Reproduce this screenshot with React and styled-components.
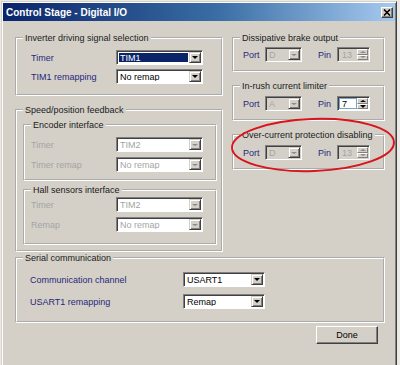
import styled, { createGlobalStyle } from 'styled-components'

const GlobalStyle = createGlobalStyle`
  * { box-sizing: border-box; }
  html, body { margin: 0; background: #eceae4; }
  body {
    font-family: 'Liberation Sans', Arial, sans-serif;
    font-size: 9px;
  }
`

function Dropdown({ value, selected, disabled, filled }) {
  return (
    <SelectBox $filled={filled}>
      <SelectValue $selected={selected} $disabled={disabled}>
        {value}
      </SelectValue>
      <ArrowButton>
        <Arrow $disabled={disabled} />
      </ArrowButton>
    </SelectBox>
  )
}

function Spinner({ value, disabled, focused }) {
  return (
    <SelectBox $filled={disabled}>
      <SpinValue $disabled={disabled} $focused={focused}>
        {value}
      </SpinValue>
      <SpinButtons>
        <SpinButton>
          <Arrow $up $disabled={disabled} />
        </SpinButton>
        <SpinButton>
          <Arrow $disabled={disabled} />
        </SpinButton>
      </SpinButtons>
    </SelectBox>
  )
}

function PortPin({ port, pin, portDisabled, pinDisabled, focused }) {
  return (
    <Row $cols="22px 37px 16px 19px 33px">
      <Label>Port</Label>
      <Dropdown value={port} disabled={portDisabled} filled />
      <span />
      <Label>Pin</Label>
      <Spinner value={pin} disabled={pinDisabled} focused={focused} />
    </Row>
  )
}

export default function App() {
  return (
    <Page>
      <GlobalStyle />
      <Window>
        <TitleBar>
          <Title>Control Stage - Digital I/O</Title>
          <CloseButton>
            <svg width="8" height="7" viewBox="0 0 8 7">
              <path d="M1 0.5 L7 6.5 M7 0.5 L1 6.5" stroke="#000" strokeWidth="1.6" />
            </svg>
          </CloseButton>
        </TitleBar>

        <Body>
          <Columns>
            <LeftColumn>
              <Group>
                <Legend>Inverter driving signal selection</Legend>
                <GroupBody $pad="6px 0 10px 14px" $gap={4}>
                  <Row $cols="85px 87px">
                    <Label>Timer</Label>
                    <Dropdown value="TIM1" selected />
                  </Row>
                  <Row $cols="85px 87px">
                    <Label>TIM1 remapping</Label>
                    <Dropdown value="No remap" />
                  </Row>
                </GroupBody>
              </Group>

              <Group>
                <Legend>Speed/position feedback</Legend>
                <GroupBody $pad="3px 4px 5px 6px" $gap={3}>
                  <SubGroup>
                    <Legend>Encoder interface</Legend>
                    <GroupBody $pad="6px 0 7px 6px" $gap={5}>
                      <Row $cols="85px 87px">
                        <Label $disabled>Timer</Label>
                        <Dropdown value="TIM2" disabled />
                      </Row>
                      <Row $cols="85px 87px">
                        <Label $disabled>Timer remap</Label>
                        <Dropdown value="No remap" disabled />
                      </Row>
                    </GroupBody>
                  </SubGroup>
                  <SubGroup>
                    <Legend>Hall sensors interface</Legend>
                    <GroupBody $pad="1px 0 11px 6px" $gap={5}>
                      <Row $cols="85px 87px">
                        <Label $disabled>Timer</Label>
                        <Dropdown value="TIM2" disabled />
                      </Row>
                      <Row $cols="85px 87px">
                        <Label $disabled>Remap</Label>
                        <Dropdown value="No remap" disabled />
                      </Row>
                    </GroupBody>
                  </SubGroup>
                </GroupBody>
              </Group>
            </LeftColumn>

            <RightColumn>
              <Group>
                <Legend>Dissipative brake output</Legend>
                <GroupBody $pad="3px 0 8px 9px">
                  <PortPin port="D" pin="13" portDisabled pinDisabled />
                </GroupBody>
              </Group>
              <Group>
                <Legend>In-rush current limiter</Legend>
                <GroupBody $pad="4px 0 8px 9px">
                  <PortPin port="A" pin="7" portDisabled focused />
                </GroupBody>
              </Group>
              <Group>
                <Legend>Over-current protection disabling</Legend>
                <GroupBody $pad="4px 0 8px 9px">
                  <PortPin port="D" pin="13" portDisabled pinDisabled />
                </GroupBody>
              </Group>
            </RightColumn>
          </Columns>

          <Group>
            <Legend>Serial communication</Legend>
            <GroupBody $pad="8px 0 12px 13px" $gap={7}>
              <Row $cols="153px 82px">
                <Label>Communication channel</Label>
                <Dropdown value="USART1" />
              </Row>
              <Row $cols="153px 82px">
                <Label>USART1 remapping</Label>
                <Dropdown value="Remap" />
              </Row>
            </GroupBody>
          </Group>

          <Footer>
            <Button>Done</Button>
          </Footer>
        </Body>
      </Window>

      <Annotation width="400" height="365" viewBox="0 0 400 365">
        <ellipse
          cx="313"
          cy="145"
          rx="81"
          ry="26"
          fill="none"
          stroke="#d8141c"
          strokeWidth="2"
          transform="rotate(-2 313 145)"
        />
      </Annotation>
    </Page>
  )
}

const Page = styled.div`
  position: relative;
  width: 400px;
  height: 365px;
  overflow: hidden;
`

const Window = styled.div`
  margin: 1px 0 0 1px;
  width: 396px;
  min-height: 380px;
  padding: 1px;
  background: #d4d0c8;
  border: 1px solid;
  border-color: #d4d0c8 #404040 #404040 #d4d0c8;
  box-shadow: inset 1px 1px 0 #fff, inset -1px -1px 0 #808080;
`

const TitleBar = styled.div`
  display: flex;
  align-items: center;
  justify-content: space-between;
  height: 18px;
  padding: 0 2px 0 3px;
  background: linear-gradient(to right, #0a246a, #3a6ea5 55%, #a6caf0);
`

const Title = styled.span`
  color: #fff;
  font-weight: bold;
  font-size: 10px;
`

const CloseButton = styled.div`
  display: flex;
  align-items: center;
  justify-content: center;
  width: 12px;
  height: 11px;
  background: #d4d0c8;
  border: 1px solid;
  border-color: #fff #404040 #404040 #fff;
  box-shadow: inset -1px -1px 0 #808080;
`

const Body = styled.div`
  padding: 11px 10px 0 12px;
`

const Columns = styled.div`
  display: flex;
  gap: 9px;
  align-items: flex-start;
`

const LeftColumn = styled.div`
  display: flex;
  flex-direction: column;
  gap: 4px;
  width: 208px;
`

const RightColumn = styled.div`
  display: flex;
  flex-direction: column;
  gap: 4px;
  width: 153px;
`

const Group = styled.fieldset`
  margin: 0;
  padding: 0;
  min-width: 0;
  border: 2px groove #fff;
  & + & {
    margin-top: 4px;
  }
`

const SubGroup = styled(Group)`
  & + & {
    margin-top: 0;
  }
`

const Legend = styled.legend`
  margin-left: 6px;
  padding: 0 2px;
  line-height: 12px;
  color: #1a1a1a;
`

const GroupBody = styled.div`
  display: flex;
  flex-direction: column;
  gap: ${({ $gap = 4 }) => $gap}px;
  padding: ${({ $pad }) => $pad};
`

const Row = styled.div`
  display: grid;
  grid-template-columns: ${({ $cols }) => $cols};
  align-items: center;
  height: 15px;
`

const Label = styled.span`
  color: ${({ $disabled }) => ($disabled ? '#a4a4a4' : '#28287a')};
  white-space: nowrap;
`

const SelectBox = styled.div`
  display: flex;
  height: 15px;
  padding: 1px;
  background: ${({ $filled }) => ($filled ? '#d4d0c8' : '#fff')};
  border: 1px solid;
  border-color: #808080 #fff #fff #808080;
  box-shadow: inset 1px 1px 0 #404040;
`

const SelectValue = styled.span`
  flex: 1;
  display: flex;
  align-items: center;
  min-width: 0;
  margin: 1px;
  padding: 0 1px;
  white-space: nowrap;
  overflow: hidden;
  background: ${({ $selected }) => ($selected ? '#0a246a' : 'transparent')};
  color: ${({ $selected, $disabled }) =>
    $selected ? '#fff' : $disabled ? '#a4a4a4' : '#000'};
`

const ArrowButton = styled.span`
  display: flex;
  align-items: center;
  justify-content: center;
  width: 12px;
  background: #d4d0c8;
  border: 1px solid;
  border-color: #d4d0c8 #404040 #404040 #d4d0c8;
  box-shadow: inset 1px 1px 0 #fff, inset -1px -1px 0 #808080;
`

const Arrow = styled.span`
  width: 0;
  height: 0;
  border-left: 3px solid transparent;
  border-right: 3px solid transparent;
  ${({ $up, $disabled }) =>
    $up
      ? `border-bottom: 2px solid ${$disabled ? '#8a8a8a' : '#000'};`
      : `border-top: ${$disabled ? '2px' : '3px'} solid ${$disabled ? '#8a8a8a' : '#000'};`}
`

const SpinValue = styled.span`
  flex: 1;
  display: flex;
  align-items: center;
  padding: 0 2px;
  border: 1px solid ${({ $focused }) => ($focused ? '#7aa2cc' : 'transparent')};
  background: ${({ $focused }) => ($focused ? '#fff' : 'transparent')};
  color: ${({ $disabled }) => ($disabled ? '#a4a4a4' : '#000')};
`

const SpinButtons = styled.span`
  display: flex;
  flex-direction: column;
  width: 11px;
`

const SpinButton = styled.span`
  flex: 1;
  display: flex;
  align-items: center;
  justify-content: center;
  background: #d4d0c8;
  border: 1px solid;
  border-color: #fff #808080 #808080 #fff;
`

const Footer = styled.div`
  display: flex;
  justify-content: flex-end;
  padding: 3px 7px 0 0;
`

const Button = styled.div`
  display: flex;
  align-items: center;
  justify-content: center;
  width: 62px;
  height: 18px;
  color: #000;
  background: #d4d0c8;
  border: 1px solid;
  border-color: #fff #404040 #404040 #fff;
  box-shadow: inset -1px -1px 0 #808080;
`

const Annotation = styled.svg`
  position: absolute;
  top: 0;
  left: 0;
  pointer-events: none;
`
